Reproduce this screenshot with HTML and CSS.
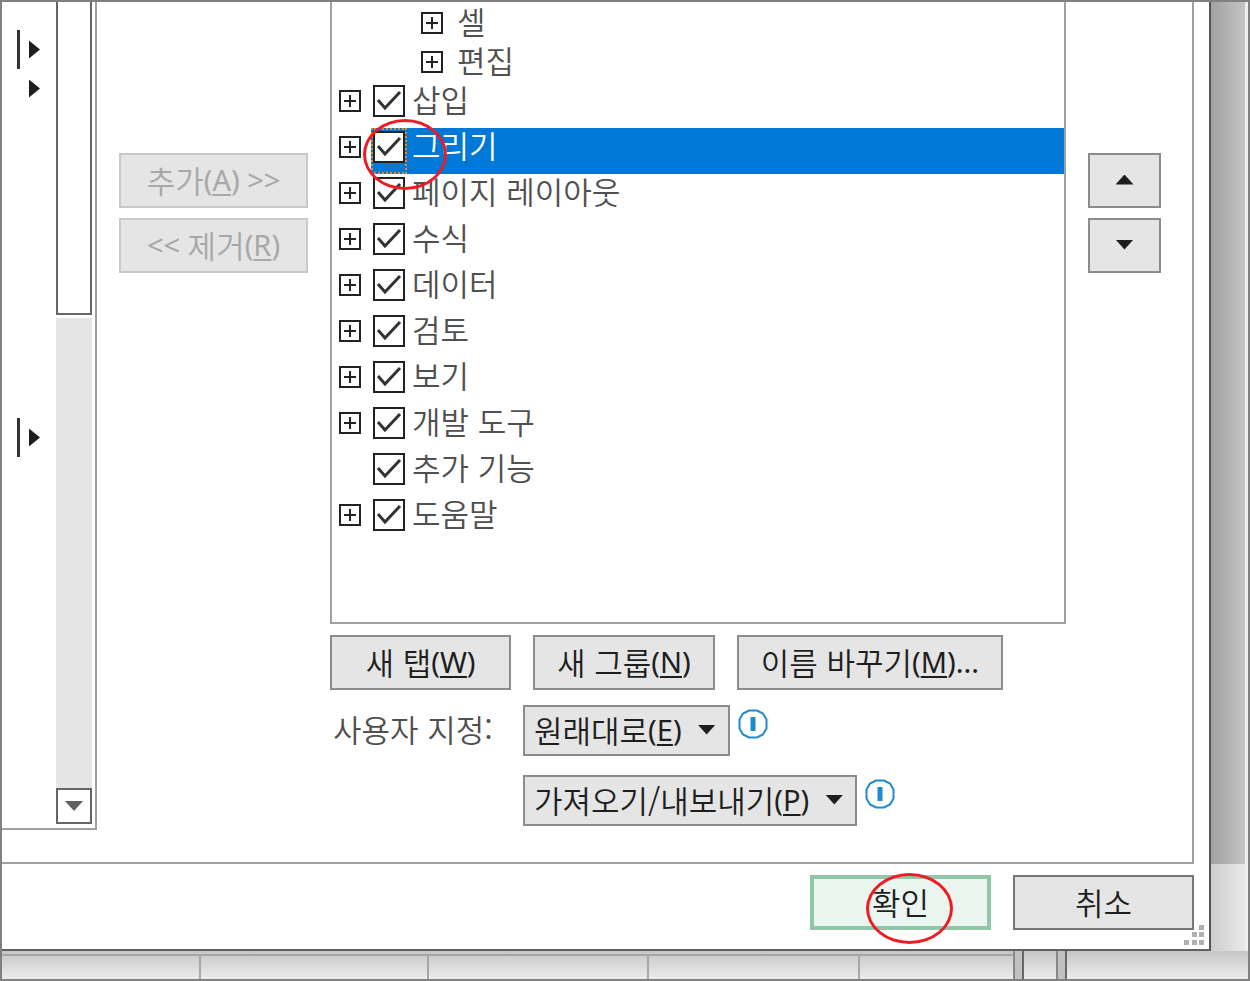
FILE: index.html
```html
<!DOCTYPE html>
<html lang="ko">
<head>
    <meta charset="UTF-8">
    <meta name="viewport" content="width=device-width, initial-scale=1.0">
    <title>리본 사용자 지정</title>
    <link rel="stylesheet" href="styles.css">
</head>
<body>
    <div class="screen">
        <div class="desktop">
            <main class="dialog">
                <div class="panel">
                    <div class="commands">
                        <ul class="flyouts">
                            <li class="split"><span class="arrow right"></span></li>
                            <li><span class="arrow right"></span></li>
                            <li class="split far"><span class="arrow right"></span></li>
                        </ul>
                        <div class="scrollbar">
                            <div class="thumb"></div>
                            <div class="track"></div>
                            <button class="scroll-down" aria-label="아래로 스크롤"><span class="arrow down"></span></button>
                        </div>
                    </div>

                    <div class="transfer">
                        <button class="btn" disabled>추가<span class="key">(<u>A</u>) &gt;&gt;</span></button>
                        <button class="btn" disabled><span class="key">&lt;&lt; </span>제거<span class="key">(<u>R</u>)</span></button>
                    </div>

                    <div class="ribbon">
                        <ul class="tree">
                            <li class="child"><button class="expand" aria-label="확장"></button><span>셀</span></li>
                            <li class="child"><button class="expand" aria-label="확장"></button><span>편집</span></li>
                            <li><button class="expand" aria-label="확장"></button><label><input type="checkbox" checked><span>삽입</span></label></li>
                            <li class="selected">
                                <button class="expand" aria-label="확장"></button><label><input type="checkbox" checked><span>그리기</span></label>
                                <span class="ring"></span>
                            </li>
                            <li><button class="expand" aria-label="확장"></button><label><input type="checkbox" checked><span>페이지 레이아웃</span></label></li>
                            <li><button class="expand" aria-label="확장"></button><label><input type="checkbox" checked><span>수식</span></label></li>
                            <li><button class="expand" aria-label="확장"></button><label><input type="checkbox" checked><span>데이터</span></label></li>
                            <li><button class="expand" aria-label="확장"></button><label><input type="checkbox" checked><span>검토</span></label></li>
                            <li><button class="expand" aria-label="확장"></button><label><input type="checkbox" checked><span>보기</span></label></li>
                            <li><button class="expand" aria-label="확장"></button><label><input type="checkbox" checked><span>개발 도구</span></label></li>
                            <li class="leaf"><label><input type="checkbox" checked><span>추가 기능</span></label></li>
                            <li><button class="expand" aria-label="확장"></button><label><input type="checkbox" checked><span>도움말</span></label></li>
                        </ul>
                        <div class="actions">
                            <button class="btn">새 탭<span class="key">(<u>W</u>)</span></button>
                            <button class="btn">새 그룹<span class="key">(<u>N</u>)</span></button>
                            <button class="btn">이름 바꾸기<span class="key">(<u>M</u>)...</span></button>
                        </div>
                        <div class="custom">
                            <span class="caption">사용자 지정:</span>
                            <div class="choice">
                                <button class="btn menu" aria-haspopup="menu">원래대로<span class="key">(<u>E</u>)</span><span class="arrow down"></span></button>
                                <svg class="info" viewBox="0 0 30 30"><path d="M11 1.500h8l6 3 3.500 6v9l-3.500 6-6 3h-8l-6-3-3.500-6v-9l3.500-6z"/><path class="bar" d="M15 8v14"/></svg>
                            </div>
                            <div class="choice">
                                <button class="btn menu" aria-haspopup="menu">가져오기/내보내기<span class="key">(<u>P</u>)</span><span class="arrow down"></span></button>
                                <svg class="info" viewBox="0 0 30 30"><path d="M11 1.500h8l6 3 3.500 6v9l-3.500 6-6 3h-8l-6-3-3.500-6v-9l3.500-6z"/><path class="bar" d="M15 8v14"/></svg>
                            </div>
                        </div>
                    </div>

                    <div class="order">
                        <button class="btn" aria-label="위로 이동"><span class="arrow up"></span></button>
                        <button class="btn" aria-label="아래로 이동"><span class="arrow down"></span></button>
                    </div>
                </div>

                <footer>
                    <button class="btn ok">확인<span class="ring"></span></button>
                    <button class="btn cancel">취소</button>
                    <svg class="grip" viewBox="0 0 20 20"><path d="M15 0h5v5h-5zM8 7h5v5H8zM15 7h5v5h-5zM0 15h5v5H0zM8 15h5v5H8zM15 15h5v5h-5z"/></svg>
                </footer>
            </main>
            <div class="edge"></div>
        </div>
        <div class="sheet">
            <div class="cells"><i></i><i></i><i></i><i></i><i></i></div>
            <div class="split-bar"></div>
            <div class="gap"></div>
            <div class="split-bar"></div>
            <div class="rest"></div>
        </div>
    </div>
</body>
</html>
```
FILE: styles.css
```css
*,
*::before {
    box-sizing: border-box;
}
body {
    margin: 0;
    font-family: "Noto Sans CJK KR", sans-serif;
    font-size: 31px;
    font-weight: 350;
    line-height: 34px;
    color: #505050;
}
ul {
    list-style: none;
    margin: 0;
    padding: 0;
}
button {
    font: inherit;
    padding: 0;
}
.screen {
    display: flex;
    flex-direction: column;
    min-height: 100vh;
    border: 2px solid #808080;
}
.desktop {
    display: flex;
}

/* dialog */
.dialog {
    flex: 1;
    background-color: #fff;
    border-right: 2px solid #555;
    border-bottom: 2px solid #606060;
}
.panel {
    display: flex;
    margin-right: 15px;
    border: 2px solid #a0a0a0;
    border-width: 0 2px 2px 0;
}
.arrow {
    display: block;
    width: 18px;
    height: 10px;
    background-color: #1e1e1e;
}
.down {
    clip-path: polygon(0 0, 100% 0, 50% 100%);
}
.up {
    clip-path: polygon(0 100%, 100% 100%, 50% 0);
}
.right {
    width: 11px;
    height: 18px;
    clip-path: polygon(0 0, 100% 50%, 0 100%);
}

/* left command list */
.commands {
    display: flex;
    justify-content: space-between;
    width: 95px;
    margin-bottom: 32px;
    padding: 0 3px 4px 0;
    border: 2px solid #a0a0a0;
    border-width: 0 2px 2px 0;
}
.flyouts {
    padding: 28px 0 0 15px;
}
.flyouts li {
    display: flex;
    align-items: center;
    height: 39px;
    padding-left: 9px;
    border-left: 3px solid transparent;
}
.flyouts .split {
    border-left-color: #333;
}
.flyouts .far {
    margin-top: 310px;
}
.scrollbar {
    display: flex;
    flex-direction: column;
    width: 36px;
}
.thumb {
    height: 313px;
    margin-bottom: 3px;
    border: 2px solid #666;
    border-top: 0;
}
.track {
    flex: 1;
    background-color: #e5e5e5;
}
.scroll-down {
    display: flex;
    align-items: center;
    justify-content: center;
    height: 36px;
    background-color: #fff;
    border: 2px solid #666;
}
.scroll-down .arrow {
    background-color: #606060;
}

/* buttons */
.btn {
    display: flex;
    align-items: center;
    justify-content: center;
    height: 55px;
    padding-bottom: 2px;
    color: #1e1e1e;
    background-color: #e5e5e5;
    border: 2px solid #8c8c8c;
    white-space: pre;
}
.btn:disabled {
    color: #a8a8a8;
    border-color: #c8c8c8;
}
.key {
    font-family: "Noto Sans", sans-serif;
    font-size: 29px;
    font-weight: 400;
}
u {
    text-underline-offset: 3px;
    text-decoration-thickness: 2px;
}
.transfer,
.order {
    display: flex;
    flex-direction: column;
    gap: 10px;
    padding-top: 151px;
}
.transfer {
    width: 189px;
    margin: 0 22px;
}
.order {
    width: 73px;
    margin: 0 31px 0 22px;
}

/* ribbon tree */
.ribbon {
    flex: 1;
    padding-bottom: 36px;
}
.tree {
    padding: 2px 0 80px;
    border: 2px solid #a0a0a0;
    border-top: 0;
}
.tree li {
    display: flex;
    position: relative;
    height: 46px;
    padding-left: 7px;
    gap: 10px;
}
.tree .child {
    height: 39px;
    padding-left: 89px;
    gap: 14px;
}
.tree .leaf {
    padding-left: 39px;
}
.expand {
    width: 22px;
    height: 22px;
    margin-top: 8px;
    border: 2px solid #222;
    background: linear-gradient(#222, #222) center / 12px 2px no-repeat,
        linear-gradient(#222, #222) center / 2px 12px no-repeat;
}
.tree label {
    display: flex;
    flex: 1;
}
.tree input {
    appearance: none;
    width: 32px;
    height: 32px;
    margin: 3px 7px 0 2px;
    border: 2px solid #222;
    background: #fff url("data:image/svg+xml,%3Csvg xmlns='http://www.w3.org/2000/svg' viewBox='0 0 28 28'%3E%3Cpath d='M3 13l7 8L25 5' fill='none' stroke='%23333' stroke-width='3'/%3E%3C/svg%3E");
}
.selected label {
    color: #fff;
    background-color: #0078d7;
}
.selected label::before {
    content: "";
    position: absolute;
    width: 36px;
    height: 46px;
    border: 2px dotted #e08a2c;
}
.ring {
    position: absolute;
    z-index: 1;
    width: 84px;
    height: 71px;
    border: 3px solid #ed1c24;
    border-radius: 50%;
}
.selected .ring {
    left: 31px;
    top: -9px;
}

/* below the tree */
.actions {
    display: flex;
    gap: 22px;
    margin-top: 11px;
}
.actions .btn {
    min-width: 181px;
    padding: 0 22px 2px;
}
.custom {
    display: grid;
    grid-template-columns: 193px 1fr;
    row-gap: 19px;
    margin-top: 15px;
}
.caption {
    padding: 7px 0 0 3px;
}
.choice {
    display: flex;
    grid-column: 2;
    gap: 8px;
}
.menu {
    height: 51px;
    padding: 0 12px 2px 9px;
}
.menu .arrow {
    margin-left: 16px;
}
.info {
    width: 30px;
    height: 30px;
    margin-top: 4px;
    fill: none;
    stroke: #1e8bcd;
    stroke-width: 2;
}
.info .bar {
    stroke-width: 5;
}

/* ok / cancel */
footer {
    display: flex;
    position: relative;
    justify-content: flex-end;
    gap: 22px;
    padding: 11px 15px 19px;
}
footer .btn {
    width: 181px;
}
.ok {
    position: relative;
    background-color: #e9f5ee;
    border: 4px solid #92c6a9;
}
.ok .ring {
    left: 52px;
    top: -6px;
    width: 87px;
}
.cancel {
    border-color: #777;
}
.grip {
    position: absolute;
    right: 5px;
    bottom: 4px;
    width: 20px;
    height: 20px;
    fill: #b0b0b0;
}

/* window behind the dialog */
.edge {
    width: 37px;
    border-right: 3px solid #eee;
    background: linear-gradient(90deg, #a2a2a2, #c4c4c4) top / 100% 862px no-repeat,
        linear-gradient(90deg, #cdcdcd, #e8e8e8);
}
.sheet {
    display: flex;
    flex: 1;
    min-height: 28px;
    background: linear-gradient(#c6c6c6, #ececec);
}
.cells {
    display: flex;
    width: 1011px;
    margin-top: 3px;
    border-top: 2px solid #a6a6a6;
}
.cells i {
    flex: 0 0 220px;
    border-right: 2px solid #a6a6a6;
}
.cells i:first-child {
    flex-basis: 199px;
}
.cells i:nth-child(2) {
    flex-basis: 228px;
}
.cells i:nth-child(4) {
    flex-basis: 211px;
}
.cells i:last-child {
    flex: 1;
    border: 0;
}
.split-bar {
    width: 11px;
    border: 2px solid #666;
    border-left-color: #888;
    background-color: #c0c0c0;
    border-width: 0 2px;
}
.gap {
    width: 32px;
}
```
